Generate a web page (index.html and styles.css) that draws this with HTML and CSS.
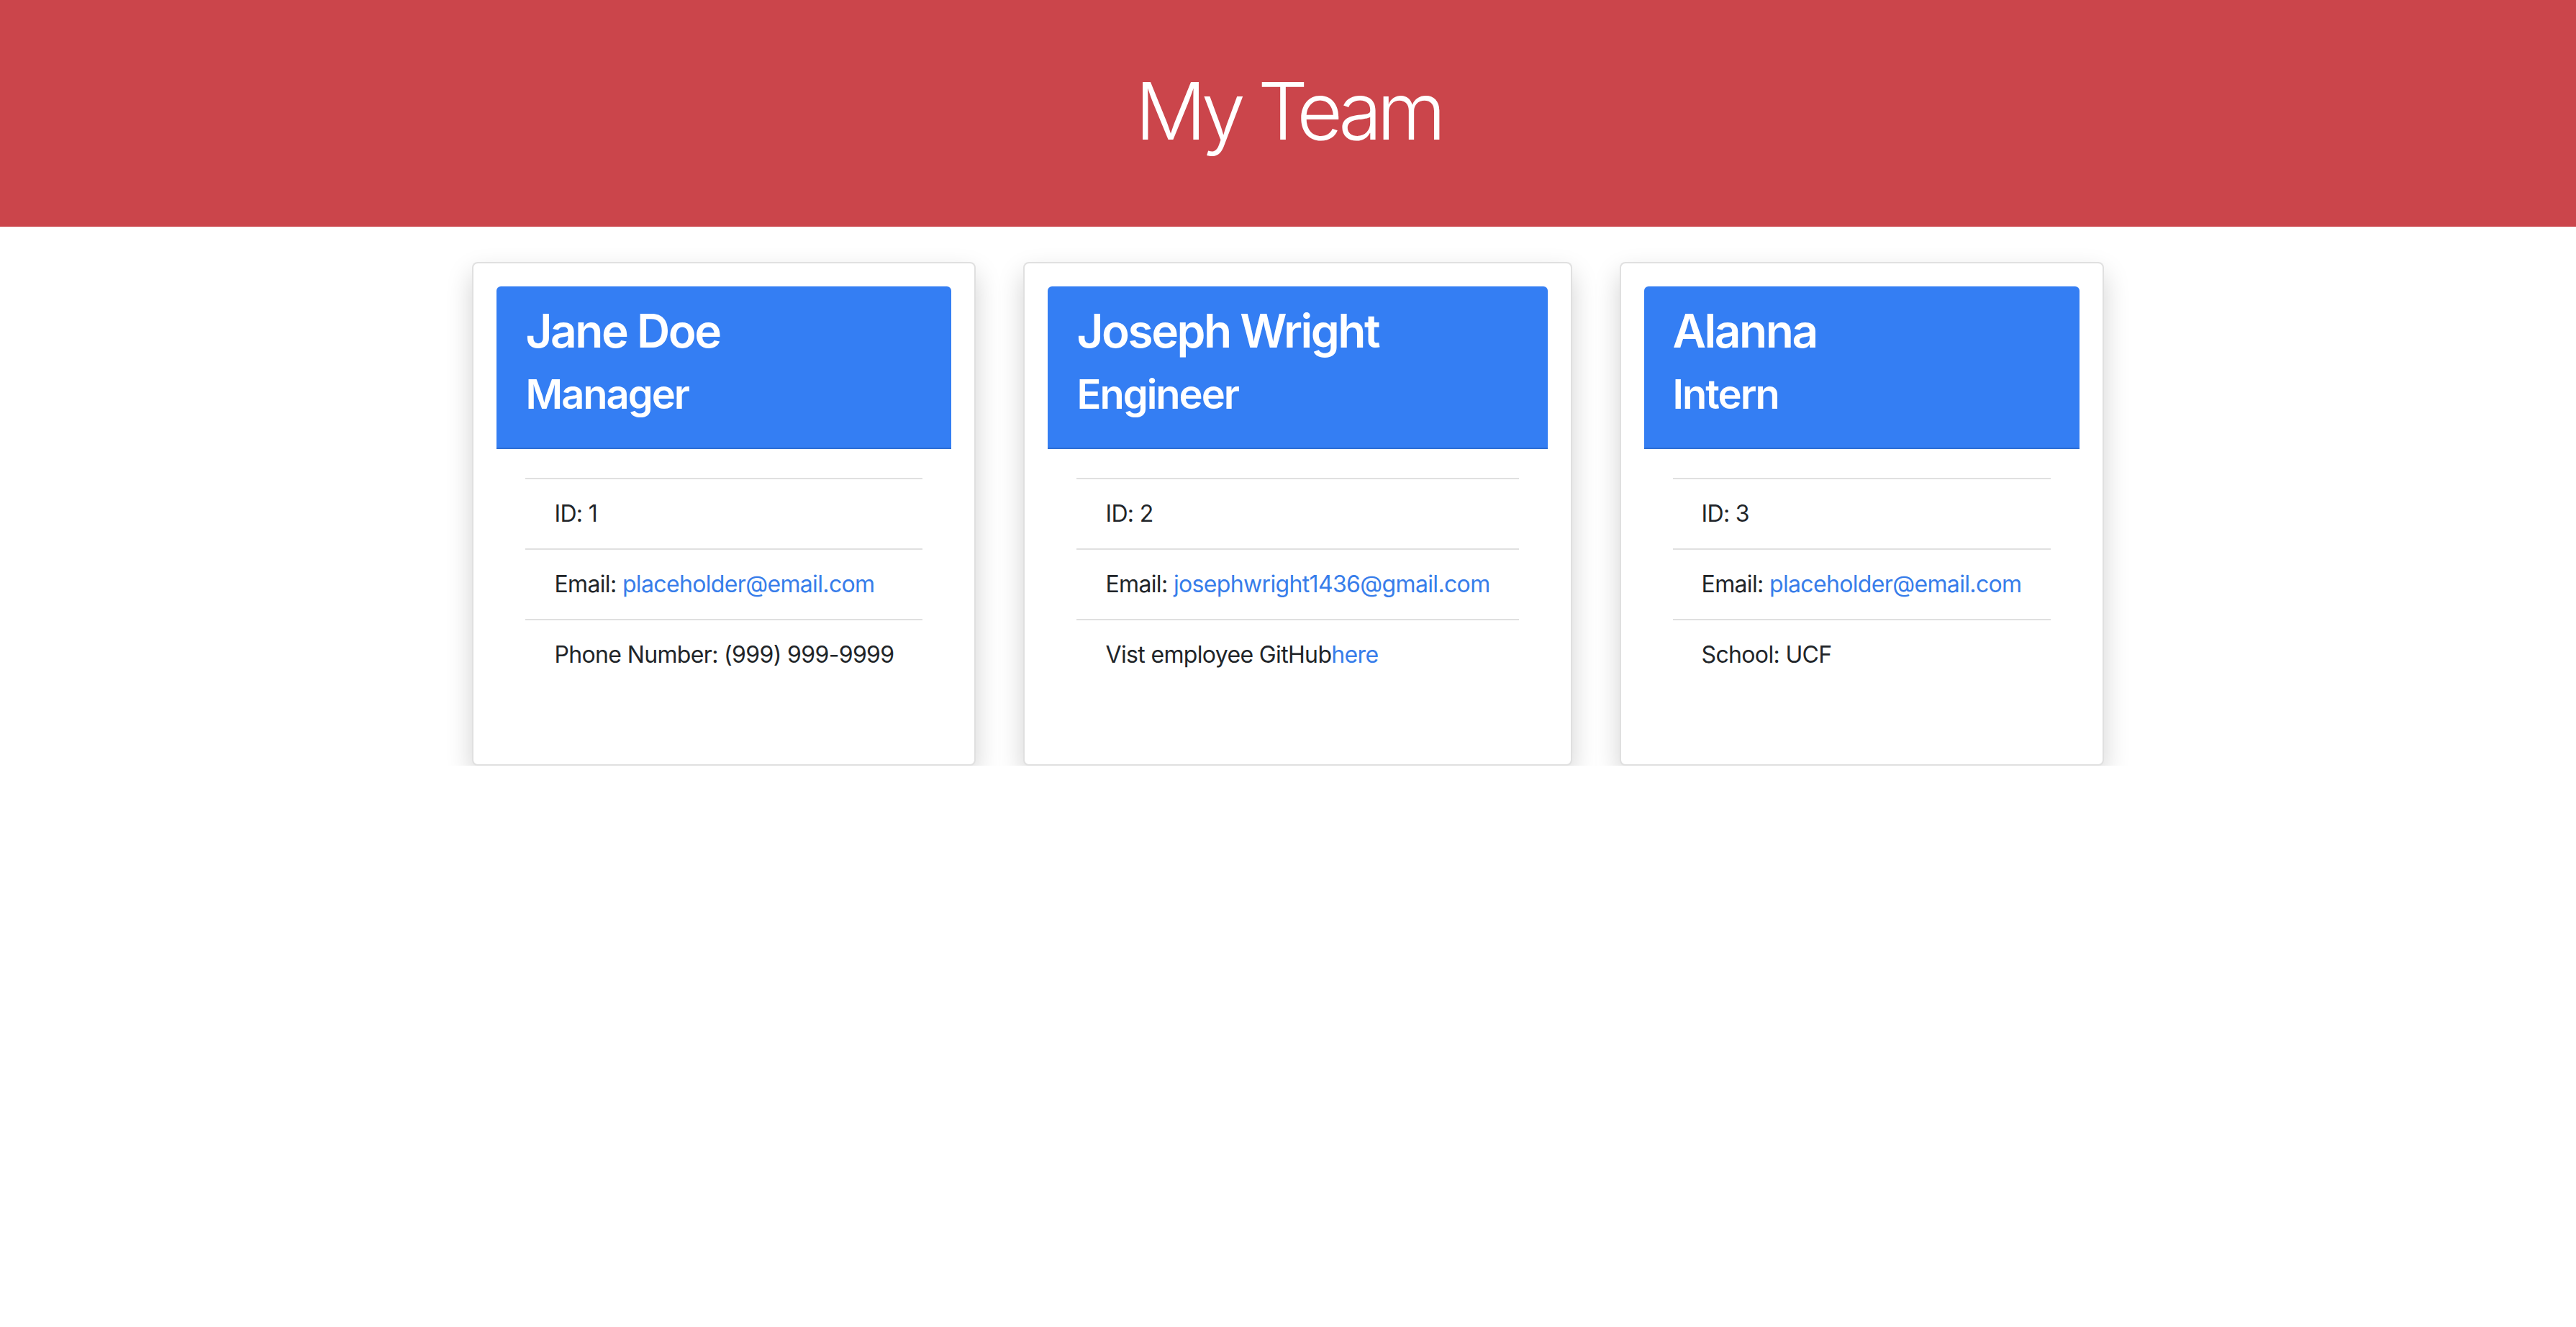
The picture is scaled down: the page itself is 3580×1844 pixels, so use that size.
FILE: index.html
```html
<!DOCTYPE html>
<html lang="en">
<head>
<meta charset="utf-8">
<title>My Team</title>
<link rel="stylesheet" href="styles.css">
</head>
<body>
<header class="jumbo">
  <h1 class="jumbo-title">My Team</h1>
</header>
<main class="team">
  <div class="card">
    <div class="card-header">
      <h2 class="name">Jane Doe</h2>
      <h3 class="role">Manager</h3>
    </div>
    <div class="card-body">
      <ul class="info">
        <li class="info-item">ID: 1</li>
        <li class="info-item">Email: <a class="link" href="#">placeholder@email.com</a></li>
        <li class="info-item">Phone Number: (999) 999-9999</li>
      </ul>
    </div>
  </div>
  <div class="card">
    <div class="card-header">
      <h2 class="name">Joseph Wright</h2>
      <h3 class="role">Engineer</h3>
    </div>
    <div class="card-body">
      <ul class="info">
        <li class="info-item">ID: 2</li>
        <li class="info-item">Email: <a class="link" href="#">josephwright1436@gmail.com</a></li>
        <li class="info-item">Vist employee GitHub<a class="link" href="#">here</a></li>
      </ul>
    </div>
  </div>
  <div class="card">
    <div class="card-header">
      <h2 class="name">Alanna</h2>
      <h3 class="role">Intern</h3>
    </div>
    <div class="card-body">
      <ul class="info">
        <li class="info-item">ID: 3</li>
        <li class="info-item">Email: <a class="link" href="#">placeholder@email.com</a></li>
        <li class="info-item">School: UCF</li>
      </ul>
    </div>
  </div>
</main>
</body>
</html>
```
FILE: styles.css
```css
* { box-sizing: border-box; }

html, body {
  margin: 0;
  padding: 0;
  background: #ffffff;
}

body {
  font-family: Inter, "Liberation Sans", sans-serif;
  font-size: 32px;
  line-height: 1.5;
  color: #212529;
}

.jumbo {
  background: #cb454b;
  padding: 87px 0 94px;
  text-align: center;
}

.jumbo-title {
  margin: 0;
  font-size: 110px;
  font-weight: 300;
  line-height: 1.22;
  color: #ffffff;
  letter-spacing: -7px;
}

.team {
  display: flex;
  justify-content: center;
  align-items: stretch;
  gap: 66px;
  margin-top: 49px;
}

.card {
  background: #ffffff;
  border: 2px solid rgba(0, 0, 0, 0.12);
  border-radius: 8px;
  padding: 32px;
  box-shadow: 0 16px 36px rgba(0, 0, 0, 0.18);
  display: flex;
  flex-direction: column;
}

.card-header {
  background: #347ef3;
  color: #ffffff;
  padding: 24px 40px;
  border-bottom: 2px solid rgba(0, 0, 0, 0.125);
  border-radius: 6px 6px 0 0;
}

.name {
  margin: 0 0 16px;
  font-size: 64px;
  font-weight: 600;
  line-height: 1.2;
  letter-spacing: -2.5px;
}

.role {
  margin: 0 0 16px;
  font-size: 56px;
  font-weight: 600;
  line-height: 1.2;
  letter-spacing: -2px;
}

.card-body {
  padding: 40px;
}

.info {
  list-style: none;
  margin: 0 0 32px;
  padding: 0;
}

.info-item {
  padding: 24px 40px;
  border-top: 2px solid rgba(0, 0, 0, 0.12);
  white-space: nowrap;
  letter-spacing: -0.65px;
}

.link {
  color: #377dea;
  text-decoration: none;
}
```
